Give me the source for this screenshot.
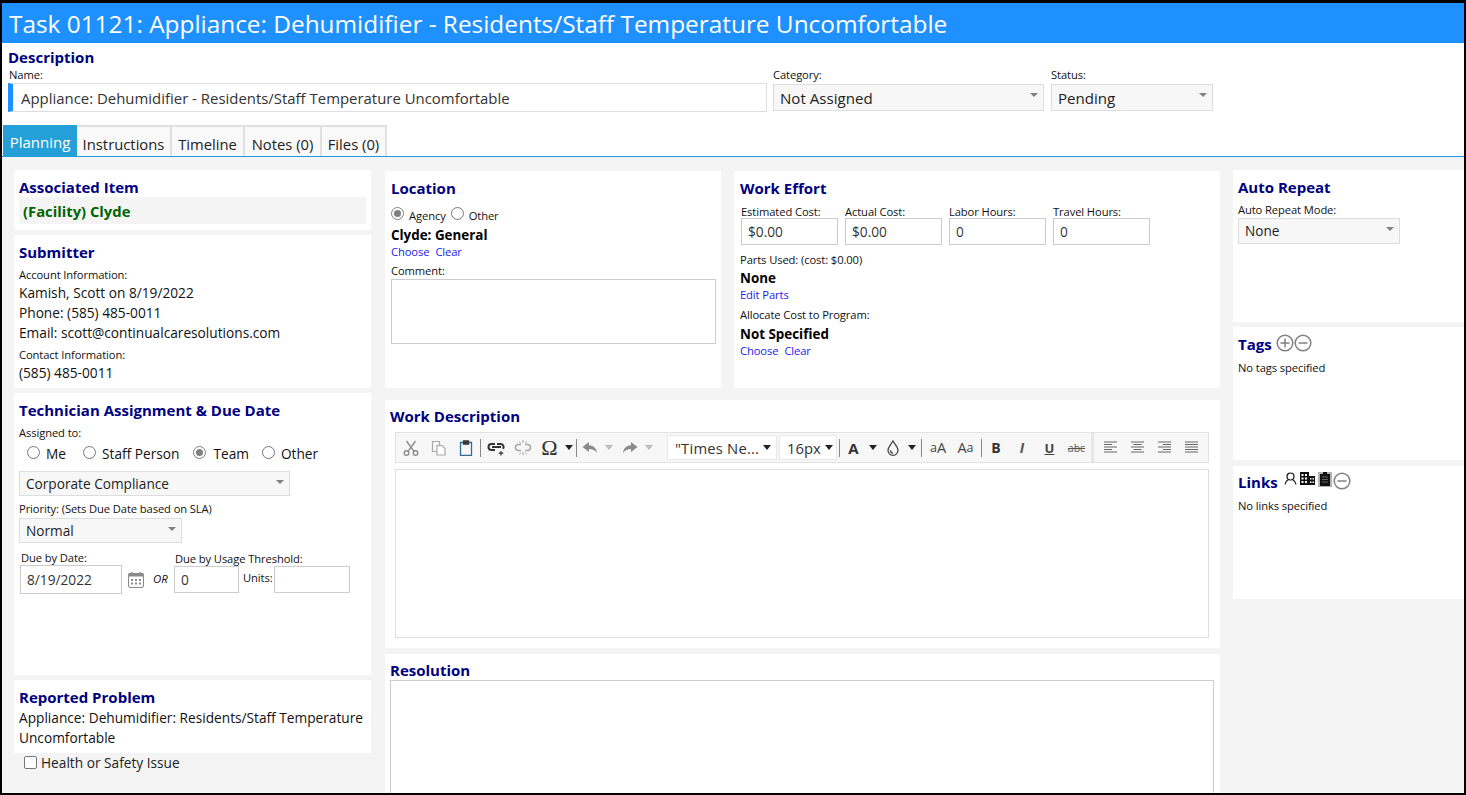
<div class="frame">
  <header class="title">Task 01121: Appliance: Dehumidifier - Residents/Staff Temperature Uncomfortable</header>
  <section class="desc">
    <h2 class="dh">Description</h2>
    <div class="descrow">
      <div class="f-name"><label>Name:</label><input class="name" value="Appliance: Dehumidifier - Residents/Staff Temperature Uncomfortable" /></div>
      <div class="f-cat"><label>Category:</label><div class="sel big">Not Assigned</div></div>
      <div class="f-stat"><label>Status:</label><div class="sel big">Pending</div></div>
    </div>
    <nav class="tabs">
      <span class="tab active t1">Planning</span><span class="tab t2">Instructions</span><span class="tab t3">Timeline</span><span class="tab t4">Notes (0)</span><span class="tab t5">Files (0)</span>
    </nav>
  </section>

  <main class="body">
    <div class="col left">
      <section class="panel assoc">
        <h3>Associated Item</h3>
        <div class="facility">(Facility) Clyde</div>
      </section>
      <section class="panel submit">
        <h3>Submitter</h3>
        <div class="sm l1">Account Information:</div>
        <div class="tx">Kamish, Scott on 8/19/2022</div>
        <div class="tx">Phone: (585) 485-0011</div>
        <div class="tx">Email: scott@continualcaresolutions.com</div>
        <div class="sm l2">Contact Information:</div>
        <div class="tx">(585) 485-0011</div>
      </section>
      <section class="panel tech">
        <h3>Technician Assignment &amp; Due Date</h3>
        <div class="sm assigned">Assigned to:</div>
        <div class="radios">
          <span class="radio r1"></span><span class="rt rt1">Me</span>
          <span class="radio r2"></span><span class="rt rt2">Staff Person</span>
          <span class="radio on r3"></span><span class="rt rt3">Team</span>
          <span class="radio r4"></span><span class="rt">Other</span>
        </div>
        <div class="sel team">Corporate Compliance</div>
        <div class="sm prio">Priority: (Sets Due Date based on SLA)</div>
        <div class="sel normal">Normal</div>
        <div class="due">
          <div class="d1"><div class="sm">Due by Date:</div><input class="inp date" value="8/19/2022" /></div>
          <svg class="cal" viewBox="0 0 16 16" width="16" height="16"><rect x="0.5" y="1.5" width="15" height="14" rx="1.5" fill="#fff" stroke="#8a8a8a"/><rect x="0.5" y="1.5" width="15" height="3" fill="#8a8a8a"/><path d="M4 0v3M12 0v3" stroke="#8a8a8a" stroke-width="1.5"/><path d="M3 7h2v2H3zM7 7h2v2H7zM11 7h2v2h-2zM3 10.500h2v2H3zM7 10.500h2v2H7zM11 10.500h2v2h-2z" fill="#8a8a8a"/></svg>
          <em class="or">OR</em>
          <div class="d2"><div class="sm">Due by Usage Threshold:</div>
            <div class="d2row"><input class="inp thr" value="0" /><span class="sm units">Units:</span><input class="inp un" /></div>
          </div>
        </div>
      </section>
      <section class="panel rep">
        <h3>Reported Problem</h3>
        <div class="tx wrap">Appliance: Dehumidifier: Residents/Staff Temperature Uncomfortable</div>
      </section>
      <div class="health"><span class="check"></span>Health or Safety Issue</div>
    </div>

    <div class="col mid">
      <div class="toprow">
        <section class="panel loc">
          <h3>Location</h3>
          <div class="locradios"><span class="radio on"></span><span class="sm ag">Agency</span><span class="radio"></span><span class="sm ot">Other</span></div>
          <div class="strong cg">Clyde: General</div>
          <div class="links"><a>Choose</a><a>Clear</a></div>
          <div class="sm cm">Comment:</div>
          <div class="comment"></div>
        </section>
        <section class="panel effort">
          <h3>Work Effort</h3>
          <div class="costs">
            <div class="cost"><div class="sm">Estimated Cost:</div><input class="inp c" value="$0.00" /></div>
            <div class="cost"><div class="sm">Actual Cost:</div><input class="inp c" value="$0.00" /></div>
            <div class="cost"><div class="sm">Labor Hours:</div><input class="inp c" value="0" /></div>
            <div class="cost"><div class="sm">Travel Hours:</div><input class="inp c" value="0" /></div>
          </div>
          <div class="sm pu">Parts Used: (cost: $0.00)</div>
          <div class="strong none">None</div>
          <div class="links ep"><a>Edit Parts</a></div>
          <div class="sm ac">Allocate Cost to Program:</div>
          <div class="strong ns">Not Specified</div>
          <div class="links cc"><a>Choose</a><a>Clear</a></div>
        </section>
      </div>
      <section class="panel wd">
        <h3>Work Description</h3>
        <div class="toolbar">
          <div class="tgroup g1">
            <span class="b w28 dis"><svg viewBox="0 0 16 16" width="16" height="16" fill="none" stroke="#8d8d8d" stroke-width="1.4"><circle cx="3.500" cy="13" r="2.300"/><circle cx="12.500" cy="13" r="2.300"/><path d="M5 11.300 12.500 1M11 11.300 3.500 1"/></svg></span>
            <span class="b w28 dis"><svg viewBox="0 0 16 16" width="16" height="16" fill="none" stroke="#a9a9a9" stroke-width="1.200"><path d="M1.500 1.500h7v10h-7z"/><path d="M6 5.500h5l3 3v6.500H6z" fill="#fff"/></svg></span>
            <span class="b w26"><svg viewBox="0 0 16 16" width="16" height="16" fill="none" stroke="#3a3a3a" stroke-width="1.300"><path d="M2.500 2.500h11v13h-11z" stroke="#2e6f95"/><path d="M5.500 1h5v3.200h-5z" fill="#3a3a3a"/></svg></span>
            <i class="sep s1"></i>
            <span class="b w27"><svg viewBox="0 0 18 16" width="18" height="16" fill="none" stroke="#333" stroke-width="2"><path d="M8 4H4.500a3 3 0 0 0 0 6H8M10 4h3.500a3 3 0 0 1 2.500 4.700M5 7h9"/><path d="M14 11v4.500M11.700 13.200h4.600" stroke-width="1.200"/></svg></span>
            <span class="b w27 dis"><svg viewBox="0 0 18 16" width="18" height="16" fill="none" stroke="#a8a8a8" stroke-width="1.600"><path d="M7 4.500H4.500a3 3 0 0 0 0 6H7M11 4.500h2.500a3 3 0 0 1 0 6H11"/><path d="M9 0v3M9 12v3M5.500 1.500l1 2M12.500 1.500l-1 2M5.500 14.500l1-2M12.500 14.500l-1-2" stroke-width="1"/></svg></span>
            <span class="b w27 omega">Ω</span>
            <span class="b w12"><i class="car dark"></i></span>
            <i class="sep s2"></i>
            <span class="b w24"><svg viewBox="0 0 16 14" width="16" height="14" fill="#8a8a8a"><path d="M7 1 0.500 6 7 11V8c3.500 0 6 1 8 4-.5-5-3.500-7.500-8-7.800z"/></svg></span>
            <span class="b w13"><i class="car lite"></i></span>
            <span class="b w3"></span>
            <span class="b w24"><svg viewBox="0 0 16 14" width="16" height="14" fill="#8a8a8a"><path d="M9 1l6.500 5L9 11V8c-3.500 0-6 1-8 4 .5-5 3.500-7.500 8-7.800z"/></svg></span>
            <span class="b w13"><i class="car lite"></i></span>
          </div>
          <div class="tgroup g2">
            <span class="fs fam">"Times Ne...<i class="car dark"></i></span>
            <span class="fs siz">16px<i class="car dark"></i></span>
            <i class="sep s3"></i>
            <span class="b w23 fa">A</span>
            <span class="b w16"><i class="car dark"></i></span>
            <span class="b w24"><svg viewBox="0 0 14 16" width="14" height="16" fill="none" stroke="#444" stroke-width="1.300"><path d="M7 1C5.500 4 2 6.800 2 10.300a5 5 0 0 0 10 0C12 6.800 8.500 4 7 1z"/><path d="M4.500 10.300A2.500 2.500 0 0 0 7 13" /></svg></span>
            <span class="b w14"><i class="car dark"></i></span>
            <i class="sep s4"></i>
            <span class="b w28 cs">a<b class="up">A</b></span>
            <span class="b w27 cs"><b class="up">A</b>a</span>
            <i class="sep s5"></i>
            <span class="b w24 bold">B</span>
            <span class="b w28 ital">I</span>
            <span class="b w27 und">U</span>
            <span class="b w27 strk">abc</span>
          </div>
          <div class="tgroup g3">
            <span class="b w27"><svg viewBox="0 0 13 13" width="13" height="13" stroke="#666" stroke-width="1.200"><path d="M0 1h13M0 3.500h8M0 6h13M0 8.500h8M0 11h13"/></svg></span>
            <span class="b w27"><svg viewBox="0 0 13 13" width="13" height="13" stroke="#666" stroke-width="1.200"><path d="M0 1h13M2.500 3.500h8M0 6h13M2.500 8.500h8M0 11h13"/></svg></span>
            <span class="b w27"><svg viewBox="0 0 13 13" width="13" height="13" stroke="#666" stroke-width="1.200"><path d="M0 1h13M5 3.500h8M0 6h13M5 8.500h8M0 11h13"/></svg></span>
            <span class="b w27"><svg viewBox="0 0 13 13" width="13" height="13" stroke="#666" stroke-width="1.200"><path d="M0 1h13M0 3.500h13M0 6h13M0 8.500h13M0 11h13"/></svg></span>
          </div>
        </div>
        <div class="editor"></div>
      </section>
      <section class="panel res">
        <h3>Resolution</h3>
        <div class="resbox"></div>
      </section>
    </div>

    <div class="col right">
      <section class="panel auto">
        <h3>Auto Repeat</h3>
        <div class="sm arm">Auto Repeat Mode:</div>
        <div class="sel none2">None</div>
      </section>
      <section class="panel tags">
        <div class="hrow">
          <h3>Tags</h3>
          <svg class="ci first" viewBox="0 0 18 18" width="18" height="18" fill="none" stroke="#808080" stroke-width="1.500"><circle cx="9" cy="9" r="7.800"/><path d="M4.500 9h9M9 4.500v9"/></svg>
          <svg class="ci" viewBox="0 0 18 18" width="18" height="18" fill="none" stroke="#808080" stroke-width="1.500"><circle cx="9" cy="9" r="7.800"/><path d="M4.500 9h9"/></svg>
        </div>
        <div class="sm empty">No tags specified</div>
      </section>
      <section class="panel linksp">
        <div class="hrow">
          <h3>Links</h3>
          <svg class="li u" viewBox="0 0 13 13" width="13" height="13" fill="none" stroke="#111" stroke-width="1.200"><circle cx="6.500" cy="4.500" r="3.500"/><path d="M1 12.500c.5-3 2.500-4.500 3.500-5M12 12.500c-.5-3-2.500-4.500-3.500-5"/></svg>
          <svg class="li" viewBox="0 0 15 13" width="15" height="13" fill="#111"><path d="M0 0h9v13H0zM9 4h6v9H9z"/><path d="M1.500 2h2v2h-2zM5 2h2v2H5zM1.500 5.500h2v2h-2zM5 5.500h2v2H5zM1.500 9h2v2h-2zM5 9h2v2H5zM10 6h1.500v1.500H10zM12.500 6H14v1.500h-1.500zM10 9.500h1.500V11H10zM12.500 9.500H14V11h-1.500z" fill="#fff"/></svg>
          <span class="clip"><svg viewBox="0 0 10 14" width="10" height="14" fill="#111"><path d="M0 2h3V0h4v2h3v12H0z"/><path d="M2 5h6M2 7.500h6M2 10h6" stroke="#777" stroke-width=".8"/></svg></span>
          <svg class="ci" viewBox="0 0 18 18" width="18" height="18" fill="none" stroke="#808080" stroke-width="1.500"><circle cx="9" cy="9" r="7.800"/><path d="M4.500 9h9"/></svg>
        </div>
        <div class="sm empty">No links specified</div>
      </section>
    </div>
  </main>
</div>

<style>
  :global(body) { margin: 0; background: #000; }
  :global(*) { box-sizing: border-box; }
  .frame {
    width: 1466px; height: 795px; overflow: hidden; background: #f4f4f4;
    border: solid #000; border-width: 3px 2px 2px 2px;
    font-family: "Open Sans", "Noto Sans", sans-serif; color: #111;
    font-size: 14.93px; display: flex; flex-direction: column;
  }
  .title {
    height: 40px; background: #1e90ff; color: #fff; font-size: 24.38px; line-height: 42px;
    padding-left: 7px; white-space: nowrap; flex: none;
  }
  .desc { background: #fff; height: 114px; flex: none; position: relative; border-bottom: 1px solid #1e9bd7; display: flex; flex-direction: column; }
  h2, h3 { margin: 0; color: #000080; font-size: 15px; font-weight: 700; line-height: 20px; }
  .dh { padding: 4px 0 0 6px; height: 24px; }
  .descrow { display: flex; padding-left: 6px; height: 58px; }
  label, .sm { font-size: 11.2px; line-height: 14px; display: block; color: #111; letter-spacing: -0.1px; }
  label { height: 14px; padding-left: 1px; margin-top: 1px; }
  .f-name { width: 759px; margin-right: 6px; }
  .name {
    display: block; width: 100%; height: 29px; margin: 1px 0 0; border: 1px solid #ddd; border-left: 5px solid #1e90ff; background: #fff;
    font: inherit; padding: 1px 0 0 8px; color: #333; outline: none;
  }
  .f-cat { width: 271px; margin-right: 7px; }
  .f-stat { width: 162px; }
  .f-cat label, .f-stat label { padding-left: 0; }
  .sel {
    position: relative; background: #f7f7f7; border: 1px solid #ddd; color: #222; font-size: 13.65px;
    padding-left: 6px; height: 25px; line-height: 23px;
  }
  .sel::after { content: ""; position: absolute; right: 5px; top: 8px; border: solid transparent; border-width: 4px 4px 0; border-top-color: #808080; }
  .sel.big { height: 27px; line-height: 26px; font-size: 15.1px; margin-top: 2px; }
  .tabs { display: flex; margin-top: auto; padding-left: 1px; height: 31px; }
  .tab { background: #f9f9f9; border: 2px solid #e0e0e0; border-bottom: 0; border-left: 0; font-size: 14.8px; line-height: 34px; text-align: center; height: 31px; color: #222; }
  .tab.active { background: #259fd7; color: #fff; border: 0; font-size: 15px; }
  .t1 { width: 74px; } .t2 { width: 95px; } .t3 { width: 73px; } .t4 { width: 77px; } .t5 { width: 65px; }

  .body { display: flex; flex: 1; min-height: 0; padding-left: 12px; }
  .col { display: flex; flex-direction: column; flex: none; }
  .panel { background: #fff; flex: none; padding: 0 5px; }
  .left { width: 357px; padding-top: 13px; margin-right: 14px; }
  .mid { width: 835px; margin-right: 13px; }
  .right { width: 231px; padding-top: 13px; }

  .assoc { height: 60px; padding-top: 7px; }
  .facility { height: 27px; background: #f4f4f4; color: #006400; font-weight: 700; font-size: 14.8px; padding-left: 4px; line-height: 29px; }
  .submit { height: 153px; margin-top: 5px; padding-top: 7px; }
  .tx { font-size: 13.7px; line-height: 20px; color: #111; }
  .sm.l1 { margin-top: 6px; margin-bottom: 1px; }
  .sm.l2 { margin-top: 5px; margin-bottom: 1px; }
  .tech { height: 282px; margin-top: 5px; padding-top: 7px; }
  .assigned { margin-top: 6px; }
  .radios { display: flex; align-items: center; height: 20px; margin-top: 3px; padding-left: 8px; font-size: 13.7px; }
  .radio { width: 13px; height: 13px; border-radius: 50%; border: 1px solid #767676; background: #fff; display: inline-block; flex: none; position: relative; }
  .radio.on::after { content: ""; position: absolute; inset: 2px; border-radius: 50%; background: #808080; }
  .radio.on { border-color: #808080; }
  .radios .radio { top: -1px; }
  .rt { margin-left: 6px; line-height: 20px; position: relative; top: 1px; }
  .rt1 { margin-right: 17px; } .rt2 { margin-right: 14px; } .rt3 { margin-right: 13px; margin-left: 7px; }
  .team { width: 271px; margin-top: 8px; }
  .prio { margin-top: 6px; }
  .normal { width: 163px; margin-top: 2px; }
  .due { display: flex; margin-top: 8px; align-items: flex-start; padding-left: 1px; }
  .d1 .sm { padding-left: 1px; height: 14px; }
  .inp { border: 1px solid #ccc; background: #fff; font: inherit; font-size: 13.7px; padding: 0 0 0 6px; color: #333; display: block; outline: none; margin: 0; }
  .date { width: 102px; height: 29px; padding-left: 6px; }
  .cal { margin: 21px 0 0 6px; }
  .or { font-size: 11.4px; margin: 20px 0 0 9px; width: 21px; }
  .d2 { padding-top: 1px; }
  .d2 .sm { padding-left: 1px; }
  .d2row { display: flex; align-items: flex-start; }
  .thr { width: 65px; height: 27px; }
  .sm.units { margin: 5px 0 0 4px; width: 31px; padding-left: 0; }
  .un { width: 76px; height: 27px; }
  .rep { height: 73px; margin-top: 5px; padding-top: 7px; }
  .wrap { margin-top: 1px; }
  .health { display: flex; align-items: center; font-size: 13.7px; padding-left: 10px; height: 19px; color: #222; }
  .check { width: 13px; height: 13px; border: 1px solid #767676; border-radius: 2px; background: #fff; margin-right: 4px; }

  .toprow { display: flex; padding-top: 14px; }
  .loc { width: 336px; height: 217px; padding: 7px 6px 0; margin-right: 13px; }
  .locradios { display: flex; align-items: center; height: 20px; margin-top: 5px; }
  .ag { margin: 6px 5px 0 5px; } .ot { margin: 6px 0 0 5px; }
  .strong { font-weight: 700; font-size: 13.4px; line-height: 18px; color: #000; }
  .cg { margin-top: 3px; }
  .links { display: flex; gap: 6px; font-size: 11.2px; line-height: 15px; letter-spacing: -0.1px; }
  .links a { color: #1a1aee; }
  .sm.cm { margin-top: 5px; }
  .comment { width: 325px; height: 65px; border: 1px solid #ccc; margin-top: 1px; }
  .effort { width: 486px; height: 217px; padding: 7px 6px 0; }
  .costs { display: flex; gap: 7px; padding-left: 1px; margin-top: 7px; }
  .cost .sm { height: 13px; }
  .c { width: 97px; height: 27px; }
  .sm.pu { margin-top: 8px; }
  .none { margin-top: 2px; }
  .sm.ac { margin-top: 6px; }
  .ns { margin-top: 3px; }
  .wd { height: 248px; margin-top: 12px; padding: 6px 10px 0 5px; }
  .toolbar { display: flex; height: 31px; background: #f7f7f7; border: 1px solid #e2e2e2; margin: 6px 0 0 5px; width: 814px; }
  .tgroup { display: flex; align-items: center; height: 29px; flex: none; }
  .g1 { width: 268px; padding-left: 1px; }
  .g2 { width: 430px; padding-left: 3px; border-right: 3px solid #e6e6e6; }
  .g3 { padding-left: 3px; }
  .b { display: inline-flex; align-items: center; justify-content: center; height: 29px; flex: none; color: #333; }
  .w3 { width: 3px; } .w12 { width: 12px; } .w13 { width: 13px; } .w14 { width: 14px; } .w16 { width: 16px; } .w23 { width: 23px; } .w24 { width: 24px; } .w26 { width: 26px; } .w27 { width: 27px; } .w28 { width: 28px; }
  .sep { width: 1px; height: 18px; background: #888; flex: none; margin: 0 1px; }
  .s3, .s4, .s5 { margin: 0 2px; }
  .car { display: inline-block; border: solid transparent; border-width: 5px 4px 0; }
  .car.dark { border-top-color: #222; }
  .car.lite { border-top-color: #bbb; }
  .omega { font-family: "Liberation Serif", serif; font-size: 22px; color: #333; }
  .fs { display: flex; align-items: center; justify-content: space-between; background: #fff; border: 1px solid #e8e8e8; height: 25px; font-size: 14.8px; color: #333; padding: 0 5px 0 7px; flex: none; }
  .fam { width: 110px; margin-right: 2px; letter-spacing: .2px; }
  .siz { width: 58px; padding-right: 3px; }
  .fa { font-weight: 700; font-size: 15px; }
  .cs { font-size: 12.5px; color: #444; }
  .up { font-weight: 400; font-size: 14.5px; }
  .bold { font-weight: 700; font-size: 14px; }
  .ital { font-style: italic; font-weight: 700; font-size: 14px; color: #555; }
  .und { text-decoration: underline; font-weight: 700; font-size: 13px; color: #444; }
  .strk { text-decoration: line-through; font-size: 10.5px; color: #555; }
  .editor { width: 814px; height: 169px; border: 1px solid #ddd; margin: 6px 0 0 5px; }
  .res { height: 200px; margin-top: 6px; padding: 6px 5px 0; }
  .resbox { width: 824px; height: 140px; border: 1px solid #ccc; }

  .auto { height: 152px; padding-top: 7px; }
  .arm { margin-top: 6px; }
  .none2 { width: 162px; height: 26px; margin-top: 1px; }
  .tags { height: 133px; margin-top: 5px; padding-top: 7px; }
  .hrow { display: flex; align-items: flex-start; height: 20px; }
  .first { margin-left: 4px; }
  .ci { flex: none; margin-top: 0; }
  .empty { margin-top: 7px; }
  .linksp { height: 133px; margin-top: 6px; padding-top: 6px; }
  .li { flex: none; margin: 0 3px 0 0; }
  .u { margin-left: 6px; margin-right: 3px; }
  .clip { background: #b3b3b3; display: inline-flex; padding: 0 2px; height: 15px; margin-right: 1px; flex: none; }
</style>
